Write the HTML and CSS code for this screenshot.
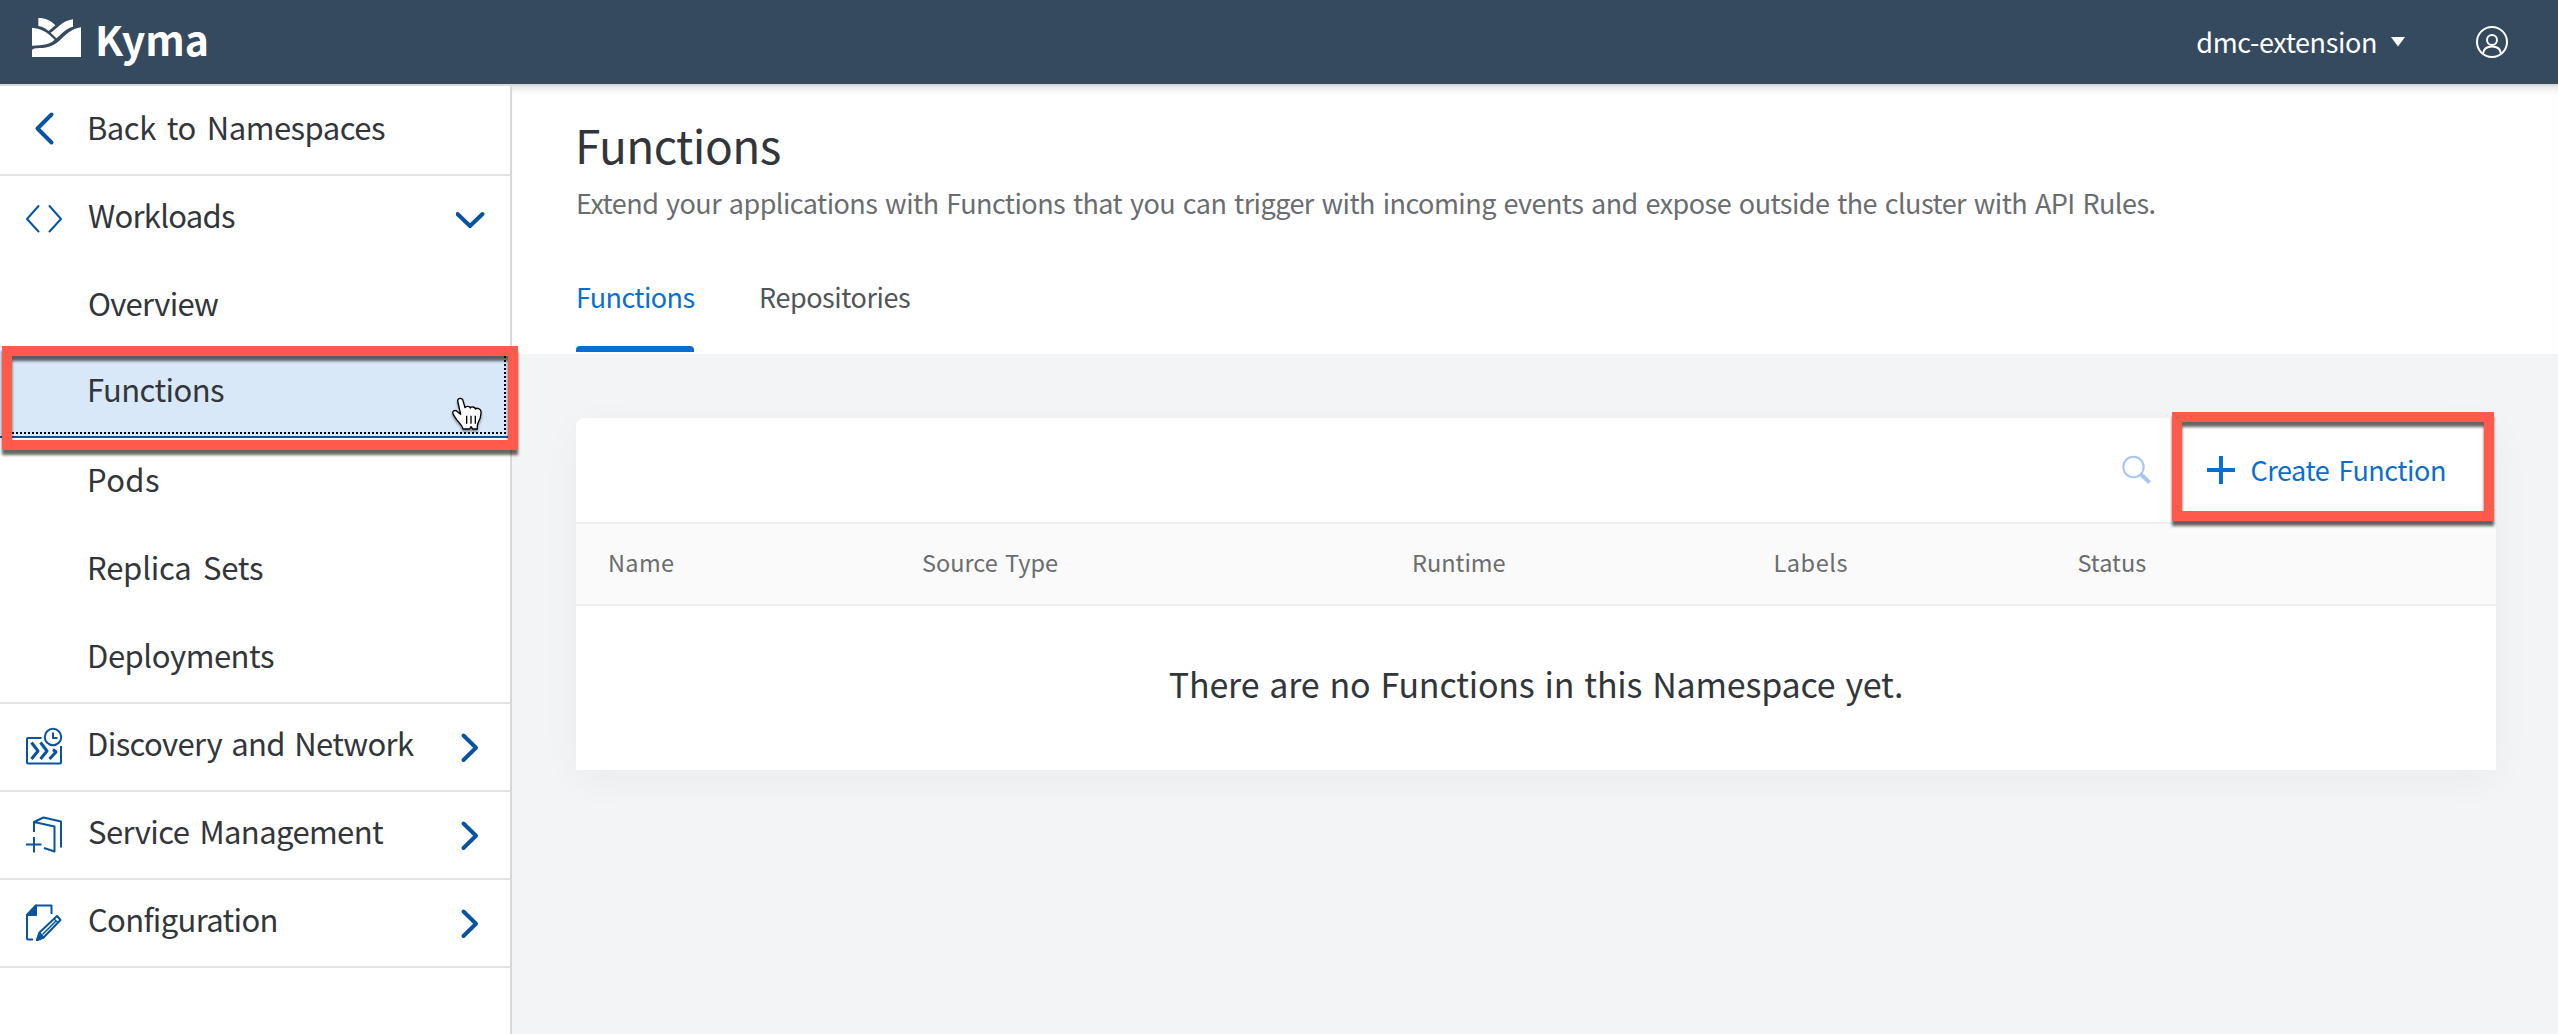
FILE: index.html
```html
<!DOCTYPE html>
<html lang="en">
<head>
<meta charset="utf-8">
<title>Kyma - Functions</title>
<link rel="stylesheet" href="styles.css">
</head>
<body>
<header class="topbar">
  <a class="brand">
    <svg class="brand-logo" viewBox="36 54 147 117" fill="#fff">
      <path d="M55 54C77 54 94 62 106 76Q94 86 86 93Q70 79 55 78Z"/>
      <path d="M159 58V80C138 85 128 99 109 115L92 98C113 86 123 64 159 58Z"/>
      <path d="M36 83C62 85 80 95 104 119C91 132 72 135 36 137Z"/>
      <path d="M183 82V171H36V150C42 143 52 145 68 144C126 140 126 92 183 82Z"/>
    </svg>
    <span class="brand-name">Kyma</span>
  </a>
  <div class="topbar-actions">
    <span class="namespace">dmc-extension</span>
    <svg class="caret" viewBox="0 0 14 10"><path d="M0 0H14L7 9.5Z" fill="#fff"/></svg>
    <svg class="avatar" viewBox="0 0 32 32" fill="none" stroke="#fff" stroke-width="2">
      <circle cx="16" cy="16" r="15"/><circle cx="16" cy="14" r="5"/>
      <path d="M7 28C7.5 23 11 20.600 16 20.600S24.500 23 25 28"/>
    </svg>
  </div>
</header>
<div class="layout">
  <nav class="sidebar">
    <a class="nav-item back">
      <svg class="nav-icon" viewBox="0 0 86 88"><path d="M51.500 28.500L37.500 42.500L51.500 56.500" fill="none" stroke="#0854a0" stroke-width="4" stroke-linecap="round" stroke-linejoin="round"/></svg>
      <span class="label t-back">Back to Namespaces</span>
    </a>
    <a class="nav-item">
      <svg class="nav-icon" viewBox="0 0 86 88"><path d="M38.500 30L27 43L38.500 55.500M49.500 30L61 43L49.500 55.500" fill="none" stroke="#0854a0" stroke-width="2" stroke-linecap="round" stroke-linejoin="round"/></svg>
      <span class="label nudge t-workloads">Workloads</span>
      <svg class="nav-arrow" viewBox="0 0 54 88"><path d="M1.500 38L14 50L26.500 38" fill="none" stroke="#0854a0" stroke-width="4" stroke-linecap="round" stroke-linejoin="round"/></svg>
    </a>
    <a class="nav-item sub"><span class="label nudge t-overview">Overview</span></a>
    <a class="nav-item sub selected"><span class="label t-functions">Functions</span></a>
    <a class="nav-item sub"><span class="label t-pods">Pods</span></a>
    <a class="nav-item sub"><span class="label t-replica">Replica Sets</span></a>
    <a class="nav-item sub ruled"><span class="label t-deploy">Deployments</span></a>
    <a class="nav-item ruled">
      <svg class="nav-icon" viewBox="0 0 86 86" fill="none" stroke="#0854a0" stroke-width="2" stroke-linejoin="round">
        <path d="M41.500 34H28Q27 34 27 35V58.500Q27 59.500 28 59.500H60Q61 59.500 61 58.500V42"/>
        <circle cx="53" cy="33" r="8.200"/><path d="M53 28.500V34H57.500"/>
        <path d="M31.500 38.500L38 47L31.500 55M40.500 38.500L47 47L40.500 55M53 45.500L56 48L49.500 55" stroke-width="3"/>
      </svg>
      <span class="label t-discovery">Discovery and Network</span>
      <svg class="nav-arrow" viewBox="0 0 54 86"><path d="M7.500 31.500L20 43.800L7.500 56" fill="none" stroke="#0854a0" stroke-width="4" stroke-linecap="round" stroke-linejoin="round"/></svg>
    </a>
    <a class="nav-item ruled">
      <svg class="nav-icon" viewBox="0 0 86 86" fill="none" stroke="#0854a0" stroke-width="2" stroke-linejoin="round">
        <path d="M34 40V30L54.500 34.500V59.500L44 56M34 30L43.500 25.500L61 29.500V55.500M26 52.500H41.500M34 45V60.500"/>
      </svg>
      <span class="label nudge t-service">Service Management</span>
      <svg class="nav-arrow" viewBox="0 0 54 86"><path d="M7.500 31.500L20 43.800L7.500 56" fill="none" stroke="#0854a0" stroke-width="4" stroke-linecap="round" stroke-linejoin="round"/></svg>
    </a>
    <a class="nav-item ruled">
      <svg class="nav-icon" viewBox="0 0 86 86" fill="none" stroke="#0854a0" stroke-width="2" stroke-linejoin="round">
        <path d="M33 59.500H28Q27 59.500 27 58.500V35L36 25.500H51.500V34"/><path d="M27 35L36 25.500V35Z" fill="#0854a0"/>
        <path d="M37 60L39.500 52.500L57 36L60.500 40L43.500 57.500Z"/><path d="M42.500 54.500L56 41M54 39L58 42.500" stroke-width="1.500"/><path d="M37 60L39.500 53L43.500 57.500Z" fill="#0854a0"/>
      </svg>
      <span class="label nudge t-config">Configuration</span>
      <svg class="nav-arrow" viewBox="0 0 54 86"><path d="M7.500 31.500L20 43.800L7.500 56" fill="none" stroke="#0854a0" stroke-width="4" stroke-linecap="round" stroke-linejoin="round"/></svg>
    </a>
  </nav>
  <main class="content">
    <section class="page-head">
      <h1 class="page-title">Functions</h1>
      <p class="page-desc">Extend your applications with Functions that you can trigger with incoming events and expose outside the cluster with API Rules.</p>
      <div class="tabs">
        <a class="tab active">Functions</a>
        <a class="tab repos">Repositories</a>
      </div>
    </section>
    <section class="card">
      <div class="toolbar">
        <svg class="search" viewBox="0 0 30 30" fill="none" stroke="#a9c6ee"><circle cx="11.500" cy="12" r="10.200" stroke-width="2"/><path d="M19.500 20L26.500 26.500" stroke-width="4" stroke-linecap="round"/></svg>
        <a class="create">
          <svg class="plus" viewBox="0 0 28 28"><path d="M14 0V28M0 14H28" stroke="#0a6ed1" stroke-width="4"/></svg>
          <span>Create Function</span>
        </a>
      </div>
      <div class="thead">
        <span class="c-name">Name</span><span class="c-source">Source Type</span><span>Runtime</span><span class="c-labels">Labels</span><span>Status</span>
      </div>
      <div class="empty">There are no Functions in this Namespace yet.</div>
    </section>
  </main>
</div>
<div class="callout callout-nav"></div>
<div class="callout callout-create"></div>
<svg class="pointer" viewBox="34 202 96 102">
  <path d="M54 214C54 204 68 203 70 213L76 234C78 229 90 228 92 235C94 230 106 231 107 238C110 234 124 236 124 247C125 262 122 268 115 280Q112 288 113 298H99L94 291L90 298H70C68 288 60 280 51 270C46 262 40 256 39 249C39 241 49 241 53 246L63 254Z" fill="#fff" stroke="#000" stroke-width="4" stroke-linejoin="round"/>
  <path d="M81 258V282M94 258V282M107 258V282" stroke="#000" stroke-width="4"/>
</svg>
</body>
</html>
```
FILE: styles.css
```css
* { box-sizing: border-box; }
body {
  margin: 0;
  height: 1034px;
  overflow: hidden;
  position: relative;
  display: flex;
  flex-direction: column;
  background: #f3f4f5;
  color: #32363a;
  font-family: "Noto Sans CJK SC", "Noto Sans", sans-serif;
}
svg { display: block; flex: none; }

.topbar {
  height: 86px;
  flex: none;
  padding: 0 50px 0 32px;
  display: flex;
  justify-content: space-between;
  background: #354a5f;
  border-bottom: 2px solid #d9d9d9;
  color: #fff;
}
.brand { display: flex; }
.brand-logo { width: 49px; height: 39px; margin-top: 18px; }
.brand-name { margin-left: 14px; font-size: 41px; font-weight: 700; line-height: 77px; }
.topbar-actions { display: flex; align-items: center; }
.namespace { padding-bottom: 1px; font-size: 27px; letter-spacing: -0.4px; line-height: 80px; }
.caret { width: 14px; height: 10px; margin-left: 14px; }
.avatar { width: 32px; height: 32px; margin-left: 71px; }

.layout { flex: 1; display: flex; min-height: 0; }
.sidebar {
  width: 512px;
  flex: none;
  background: #fff;
  border-right: 2px solid #d9d9d9;
}
.nav-item {
  display: flex;
  height: 88px;
  font-size: 31px;
  line-height: 78px;
  white-space: nowrap;
}
.nav-item.back { height: 90px; line-height: 82px; border-bottom: 2px solid #e4e4e4; }
.nav-item.ruled { border-bottom: 2px solid #e4e4e4; }
.nav-item.sub { padding-left: 86px; }
.nav-item.selected {
  position: relative;
  margin: -2px 0 2px;
  background: #d8e8f8;
  border-bottom: 2px solid #0854a0;
}
.nav-item.selected::after {
  content: "";
  position: absolute;
  inset: 2px 4px 2px 4px;
  border: 2px dotted #000;
}
.nav-icon { width: 86px; height: 100%; }
.label { flex: 1; padding-left: 1px; }
.label.nudge { padding-left: 2px; }
.nav-arrow { width: 54px; height: 100%; }
.t-back { letter-spacing: -0.5px; word-spacing: 4.600px; }
.t-workloads { letter-spacing: -0.74px; }
.t-overview { letter-spacing: -0.73px; }
.t-functions { letter-spacing: -0.58px; }
.t-pods { letter-spacing: 0.4px; }
.t-replica { letter-spacing: -0.2px; word-spacing: 4.600px; }
.t-deploy { letter-spacing: -0.45px; }
.t-discovery { letter-spacing: -0.6px; word-spacing: 2.850px; }
.t-service { letter-spacing: -0.6px; word-spacing: 3.800px; }
.t-config { letter-spacing: -0.67px; }

.content { flex: 1; min-width: 0; }
.page-head {
  height: 268px;
  padding: 28px 0 0 63px;
  background: #fff;
  box-shadow: inset 0 8px 8px -6px rgba(0, 0, 0, 0.14);
}
.page-title { margin: 0; font-size: 46px; font-weight: 400; line-height: 60px; letter-spacing: -0.6px; }
.page-desc { margin: 9px 0 0 1px; font-size: 27px; line-height: 40px; letter-spacing: -0.55px; word-spacing: 2.250px; color: #6a6d70; white-space: nowrap; }
.tabs { display: flex; gap: 65px; margin: 54px 0 0 1px; }
.tab { height: 75px; font-size: 27px; line-height: 40px; letter-spacing: -0.45px; color: #51555a; }
.tab.active { width: 118px; color: #0a6ed1; letter-spacing: -0.6px; display: flex; flex-direction: column; justify-content: space-between; white-space: nowrap; }
.tab.active::after { content: ""; height: 6px; border-radius: 4px 4px 0 0; background: #0a6ed1; }

.card {
  width: 1920px;
  height: 352px;
  margin: 64px 0 0 64px;
  background: #fff;
  border-radius: 8px 8px 0 0;
  box-shadow: 0 10px 40px rgba(0, 0, 0, 0.04);
}
.toolbar { height: 104px; padding-right: 50px; display: flex; justify-content: flex-end; align-items: center; }
.search { width: 30px; height: 30px; }
.create { display: flex; align-items: center; margin-left: 55px; color: #0a6ed1; font-size: 27px; letter-spacing: -0.45px; word-spacing: 3.600px; line-height: 100px; }
.create span { padding-bottom: 1px; }
.plus { width: 28px; height: 28px; margin-right: 15.500px; }
.thead {
  height: 84px;
  padding-left: 32px;
  display: grid;
  grid-template-columns: 314px 490px 361.500px 304px 1fr;
  border-top: 2px solid #eee;
  border-bottom: 2px solid #eee;
  background: #fafafa;
  color: #6a6d70;
  font-size: 23.500px;
  line-height: 77px;
}
.c-name { letter-spacing: 0.34px; }
.c-source { word-spacing: 1.900px; }
.c-labels { letter-spacing: 0.56px; }
.empty { font-size: 34px; line-height: 156px; letter-spacing: -0.2px; word-spacing: 2.600px; text-align: center; }

.callout {
  position: absolute;
  border: 10px solid #ff5a4c;
  filter: drop-shadow(0 5px 1.500px rgba(0, 0, 0, 0.6));
}
.callout-nav { left: 2px; top: 346px; width: 516px; height: 104px; }
.callout-create { left: 2172px; top: 412px; width: 322px; height: 109px; }
.pointer { position: absolute; left: 451px; top: 397px; width: 32px; height: 34px; filter: drop-shadow(0 2px 1px rgba(0, 0, 0, 0.4)); }
```
